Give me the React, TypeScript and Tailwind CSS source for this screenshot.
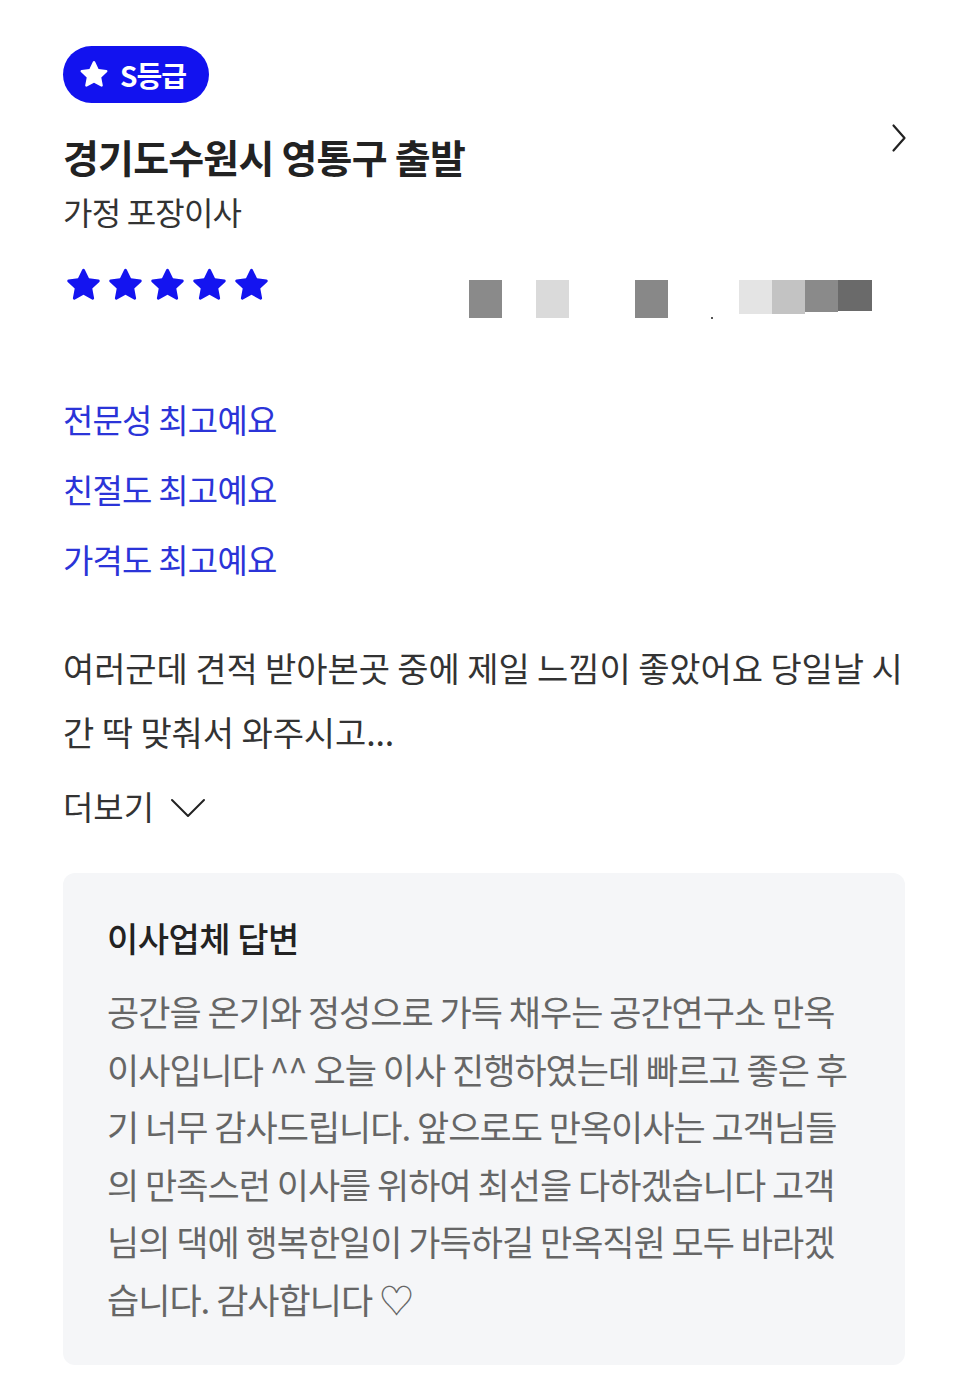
const font = { fontFamily: '"Noto Sans CJK KR", "Noto Sans", sans-serif' };

function Star({ className }: { className: string }) {
  return (
    <svg viewBox="0 0 24 24" className={className} fill="currentColor">
      <path d="M12 2.2c.35 0 .66.2.8.52l2.42 5.1 5.56.7c.7.09.98.95.47 1.43l-4.1 3.84 1.05 5.5c.13.69-.6 1.22-1.22.88L12 17.45l-4.98 2.72c-.62.34-1.35-.19-1.22-.88l1.05-5.5-4.1-3.84c-.51-.48-.23-1.34.47-1.43l5.56-.7 2.42-5.1c.14-.32.45-.52.8-.52z" />
    </svg>
  );
}

const replyLines = [
  "공간을 온기와 정성으로 가득 채우는 공간연구소 만옥",
  "이사입니다 ^^ 오늘 이사 진행하였는데 빠르고 좋은 후",
  "기 너무 감사드립니다. 앞으로도 만옥이사는 고객님들",
  "의 만족스런 이사를 위하여 최선을 다하겠습니다 고객",
  "님의 댁에 행복한일이 가득하길 만옥직원 모두 바라겠",
  "습니다. 감사합니다 ♡",
];

export default function App() {
  return (
    <div className="min-h-[1388px] w-[968px] bg-white px-[63px] pt-[46px]" style={font}>
      <div className="flex h-[57px] w-[146px] items-center gap-[9px] rounded-full bg-[#1212ef] pl-[14px]">
        <Star className="h-[34px] w-[34px] text-white" />
        <span className="text-[28px] font-bold leading-none tracking-[-1px] text-white">S등급</span>
      </div>

      <div className="mt-[28px] flex items-start justify-between">
        <div>
          <h1 className="text-[39px] font-bold leading-[50px] tracking-[-0.8px] text-[#222]">경기도수원시 영통구 출발</h1>
          <p className="mt-[9px] text-[32px] leading-[42px] tracking-[-0.8px] text-[#333]">가정 포장이사</p>
        </div>
        <svg viewBox="0 0 16 30" className="mr-[-2px] mt-[-8px] h-[30px] w-[16px]" fill="none" stroke="#222" strokeWidth={2.2} strokeLinecap="round" strokeLinejoin="round">
          <path d="M2.5 2.5 L13.5 15 L2.5 27.5" />
        </svg>
      </div>

      <div className="mt-[33px] flex items-start">
        <div className="flex gap-[1px]">
          {[0, 1, 2, 3, 4].map((i) => (
            <Star key={i} className="h-[41px] w-[41px] text-[#1414f0]" />
          ))}
        </div>
        <div className="ml-[197px] mt-[15px] flex items-start">
          <div className="h-[38px] w-[33px] bg-[#8a8a8a]" />
          <div className="ml-[34px] h-[38px] w-[33px] bg-[#dadada]" />
          <div className="ml-[66px] h-[38px] w-[33px] bg-[#888]" />
          <div className="ml-[43px] mt-[37px] h-[2px] w-[2px] bg-[#555]" />
          <div className="ml-[26px] h-[34px] w-[33px] bg-[#e4e4e4]" />
          <div className="h-[34px] w-[33px] bg-[#c3c3c3]" />
          <div className="h-[32px] w-[33px] bg-[#8a8a8a]" />
          <div className="h-[31px] w-[34px] bg-[#6a6a6a]" />
        </div>
      </div>

      <div className="mt-[65px] flex flex-col text-[33px] leading-[70px] tracking-[-0.8px] text-[#2b34d8]">
        <span>전문성 최고예요</span>
        <span>친절도 최고예요</span>
        <span>가격도 최고예요</span>
      </div>

      <div className="mt-[42px] text-[34px] leading-[64px] tracking-[-0.1px] text-[#333]">
        <div className="whitespace-nowrap">여러군데 견적 받아본곳 중에 제일 느낌이 좋았어요 당일날 시</div>
        <div className="whitespace-nowrap">간 딱 맞춰서 와주시고...</div>
      </div>

      <div className="mt-[10px] flex items-center gap-[16px] text-[33px] leading-[64px] text-[#333]">
        <span>더보기</span>
        <svg viewBox="0 0 36 20" className="mt-[4px] h-[20px] w-[36px]" fill="none" stroke="#222" strokeWidth={2} strokeLinecap="round" strokeLinejoin="round">
          <path d="M2 2 L18 18 L34 2" />
        </svg>
      </div>

      <div className="mt-[35px] rounded-[12px] bg-[#f5f6f8] px-[44px] pb-[38px] pt-[40px]">
        <h2 className="text-[34px] font-medium leading-[50px] tracking-[-0.5px] text-[#222]">이사업체 답변</h2>
        <div className="mt-[19px] text-[35px] leading-[57.5px] tracking-[-1px] text-[#666]">
          {replyLines.map((l) => (
            <div key={l} className="whitespace-nowrap">{l}</div>
          ))}
        </div>
      </div>
    </div>
  );
}
